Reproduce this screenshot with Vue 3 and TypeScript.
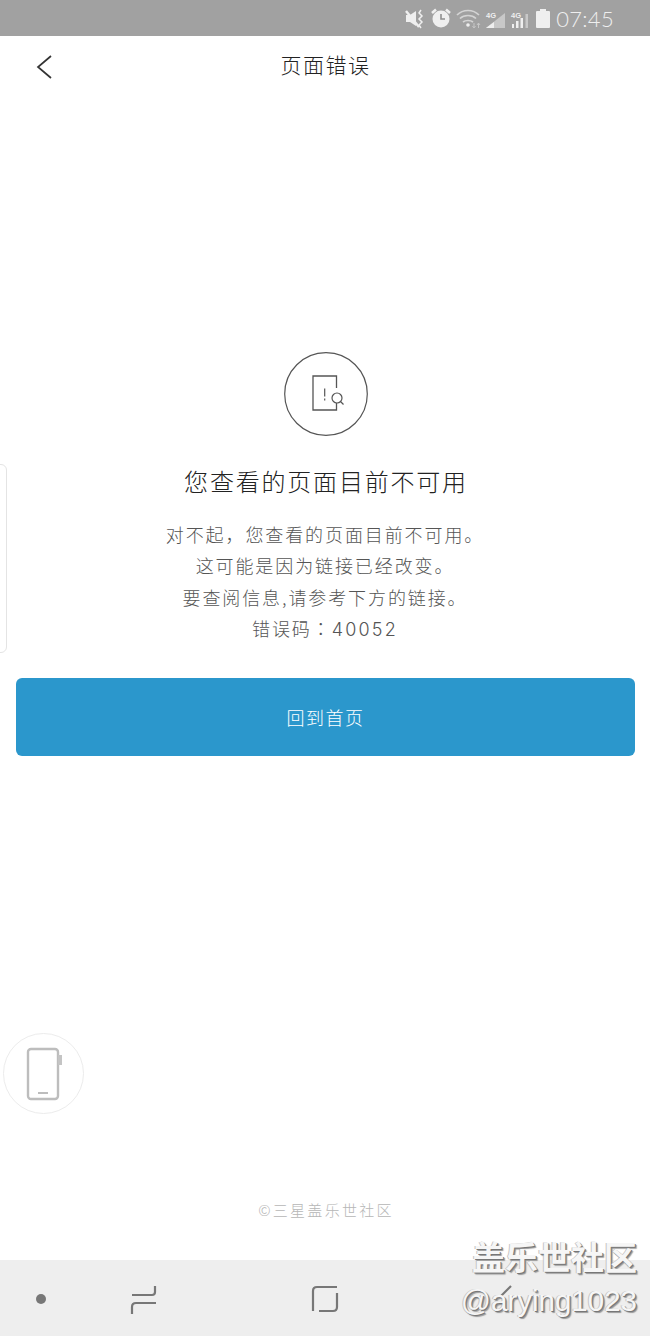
<script setup lang="ts">
interface MessageLine {
  text: string
  code?: string
}

const messageLines: MessageLine[] = [
  { text: '对不起，您查看的页面目前不可用。' },
  { text: '这可能是因为链接已经改变。' },
  { text: '要查阅信息,请参考下方的链接。' },
  { text: '错误码', code: '40052' },
]
</script>

<template>
  <div class="page">
    <div class="status-bar">
      <!-- viewBox is in page coordinates so it's easy to compare -->
      <svg class="status-icons" width="146" height="26" viewBox="405 5 146 26">
        <!-- mute + vibrate -->
        <path d="M407 15h4l6-4v15l-6-4h-4z" fill="#efefef" />
        <path d="M407 11l13 16" stroke="#efefef" stroke-width="2.400" />
        <path d="M422 10l-2 3 3 3-3 3 3 3-3 3 2 3" stroke="#efefef" stroke-width="1.500" fill="none" />
        <!-- alarm -->
        <circle cx="442" cy="19" r="8.500" fill="#efefef" />
        <path d="M442 14v5h4" stroke="#8f8f8f" stroke-width="1.600" fill="none" />
        <path d="M433 13l4-3.500M451 13l-4-3.500" stroke="#efefef" stroke-width="2.600" />
        <!-- wifi -->
        <path d="M458 15c6-6 16-6 22 0M461 18.500c4-4 12-4 16 0M464 22c2.500-2 7.500-2 10 0" stroke="#d4d4d4" stroke-width="1.700" fill="none" />
        <circle cx="469" cy="25" r="1.800" fill="#efefef" />
        <path d="M475 23v5M473.500 26l1.500 2 1.500-2M479.500 28v-5M478 25l1.500-2 1.500 2" stroke="#c6c6c6" stroke-width="1" fill="none" />
        <!-- sim 1 -->
        <path d="M487 28L506 13v15z" fill="#c8c8c8" />
        <path d="M487 28l8-6v6z" fill="#efefef" />
        <text x="487" y="18" class="net">4G</text>
        <!-- sim 2 -->
        <text x="512" y="18" class="net">4G</text>
        <path d="M513 24h2v4h-2zM517 21h2.500v7H517zM521.500 18h2.500v10h-2.500z" fill="#efefef" />
        <path d="M526.500 14h2.500v14h-2.500z" fill="#c8c8c8" />
        <!-- battery -->
        <path d="M541 9h6v2h3a1 1 0 0 1 1 1v15a1 1 0 0 1-1 1h-12a1 1 0 0 1-1-1V12a1 1 0 0 1 1-1h3z" fill="#efefef" />
      </svg>
      <span class="clock">07:45</span>
    </div>

    <header class="nav-header">
      <svg class="back" width="18" height="26" viewBox="0 0 18 26">
        <path d="M16 2L3 13l13 11" fill="none" stroke="#333" stroke-width="1.700" />
      </svg>
      <h1 class="nav-title">页面错误</h1>
    </header>

    <main class="content">
      <div class="error-badge">
        <svg width="84" height="84" viewBox="0 0 84 84">
          <circle cx="42" cy="42" r="41.300" fill="none" stroke="#555" stroke-width="1.200" />
          <path d="M52.500 36V24H29v34h23.500v-7" fill="none" stroke="#555" stroke-width="1.300" />
          <path d="M40.700 36.500v8M40.700 46.500v2" stroke="#555" stroke-width="1.200" />
          <circle cx="53" cy="46" r="5" fill="none" stroke="#555" stroke-width="1.200" />
          <path d="M56.500 49.500l3 3" stroke="#555" stroke-width="1.200" />
        </svg>
      </div>
      <h2 class="headline">您查看的页面目前不可用</h2>
      <p v-for="line in messageLines" :key="line.text" class="message">
        {{ line.text }}<template v-if="line.code"><span class="colon">：</span><span class="code">{{ line.code }}</span></template>
      </p>
      <button class="home-btn">回到首页</button>
    </main>

    <footer class="copyright">©三星盖乐世社区</footer>

    <nav class="soft-keys">
      <span class="key-dot"></span>
      <svg class="key-recent" width="28" height="30" viewBox="0 0 28 30">
        <path d="M25 1v6q0 3-3 3H2M26 18H6q-4 0-4 4v7" fill="none" stroke="#777" stroke-width="2.200" />
      </svg>
      <svg class="key-home" width="28" height="28" viewBox="0 0 28 28">
        <path d="M2 26V6q0-4 4-4h20M26 8v14q0 4-4 4H8" fill="none" stroke="#777" stroke-width="2.200" />
      </svg>
      <svg class="key-back" width="16" height="26" viewBox="0 0 16 26">
        <path d="M14 1L2 13" fill="none" stroke="#777" stroke-width="2.200" />
      </svg>
    </nav>

    <!-- things floating on top of the page -->
    <div class="side-tab"></div>
    <div class="phone-float">
      <svg width="38" height="54" viewBox="0 0 38 54">
        <rect x="2" y="2" width="30" height="50" rx="3" fill="none" stroke="#bdbdbd" stroke-width="2.400" />
        <rect x="32" y="8" width="4" height="10" fill="#c4c4c4" />
        <path d="M12 46h10" stroke="#bdbdbd" stroke-width="2" />
      </svg>
    </div>
    <div class="watermark">
      <div class="wm-name">盖乐世社区</div>
      <div class="wm-user">@arying1023</div>
    </div>
  </div>
</template>

<style scoped>
.page {
  position: relative;
  display: flex;
  flex-direction: column;
  width: 650px;
  height: 1336px;
  overflow: hidden;
  background: #fff;
  font-family: "Noto Sans CJK SC", "Liberation Sans", sans-serif;
  font-weight: 300;
}

.status-bar {
  display: flex;
  align-items: center;
  justify-content: flex-end;
  flex: none;
  height: 36px;
  padding-right: 36px;
  background: #a1a1a1;
}

.status-icons {
  margin-right: 6px;
}

.net {
  font-family: "Liberation Sans", sans-serif;
  font-size: 7.500px;
  font-weight: 700;
  fill: #efefef;
}

.clock {
  font-family: "Lato", sans-serif;
  font-size: 22px;
  font-weight: 300;
  color: #efefef;
  letter-spacing: 0.300px;
}

.nav-header {
  position: relative;
  display: flex;
  align-items: center;
  justify-content: center;
  flex: none;
  height: 60px;
  padding-bottom: 4px;
  box-sizing: border-box;
}

.back {
  position: absolute;
  left: 35px;
  top: 18px;
}

.nav-title {
  margin: 0 0 0 1px;
  font-size: 21px;
  font-weight: 300;
  letter-spacing: 1.500px;
  color: #222;
}

.content {
  display: flex;
  flex-direction: column;
  align-items: center;
  padding: 256px 15px 0;
}

.error-badge {
  width: 84px;
  height: 84px;
  margin-left: 2px;
}

.headline {
  margin: 27px 0 20px 2px;
  font-size: 24px;
  line-height: 36px;
  font-weight: 300;
  letter-spacing: 1.800px;
  color: #222;
}

.message {
  margin: 0;
  font-size: 18px;
  line-height: 31.300px;
  letter-spacing: 1.900px;
  color: #555;
}

.colon {
  font-family: "Noto Sans CJK TC", sans-serif;
}

.code {
  font-family: "Inter", sans-serif;
  font-weight: 300;
  letter-spacing: 2.200px;
}

.home-btn {
  width: 619px;
  height: 78px;
  margin: 33px 0 0 1px;
  border: 0;
  border-radius: 6px;
  background: #2b97cc;
  color: #fff;
  font-family: inherit;
  font-size: 18px;
  font-weight: 300;
  letter-spacing: 1.500px;
}

.copyright {
  margin-top: auto;
  margin-bottom: 39px;
  padding-left: 2px;
  text-align: center;
  font-size: 15px;
  line-height: 22px;
  letter-spacing: 2.300px;
  color: #b6b6b6;
}

.soft-keys {
  position: relative;
  flex: none;
  height: 76px;
  background: #eee;
}

.key-dot {
  position: absolute;
  left: 36px;
  top: 34px;
  width: 10px;
  height: 10px;
  border-radius: 50%;
  background: #777;
}

.key-recent {
  position: absolute;
  left: 130px;
  top: 25px;
}

.key-home {
  position: absolute;
  left: 311px;
  top: 25px;
}

.key-back {
  position: absolute;
  left: 497px;
  top: 25px;
}

.side-tab {
  position: absolute;
  left: -6px;
  top: 464px;
  width: 11px;
  height: 187px;
  border: 1px solid #e4e4e4;
  border-radius: 6px;
  background: #fff;
}

.phone-float {
  position: absolute;
  left: 3px;
  top: 1033px;
  display: flex;
  align-items: center;
  justify-content: center;
  box-sizing: border-box;
  width: 81px;
  height: 81px;
  padding-left: 2px;
  border: 1.500px solid #ececec;
  border-radius: 50%;
  background: #fff;
}

.watermark {
  position: absolute;
  right: 13px;
  top: 1236px;
  text-align: right;
  color: #f6f6f6;
  text-shadow: 1px 1px 0 #777, 2px 2px 1px #999, -1px 0 0 #c4c4c4;
}

.wm-name {
  font-size: 33px;
  line-height: 40px;
  font-weight: 700;
}

.wm-user {
  margin-top: 5px;
  font-family: "Liberation Sans", sans-serif;
  font-size: 29.500px;
  line-height: 40px;
  font-weight: 400;
}
</style>
